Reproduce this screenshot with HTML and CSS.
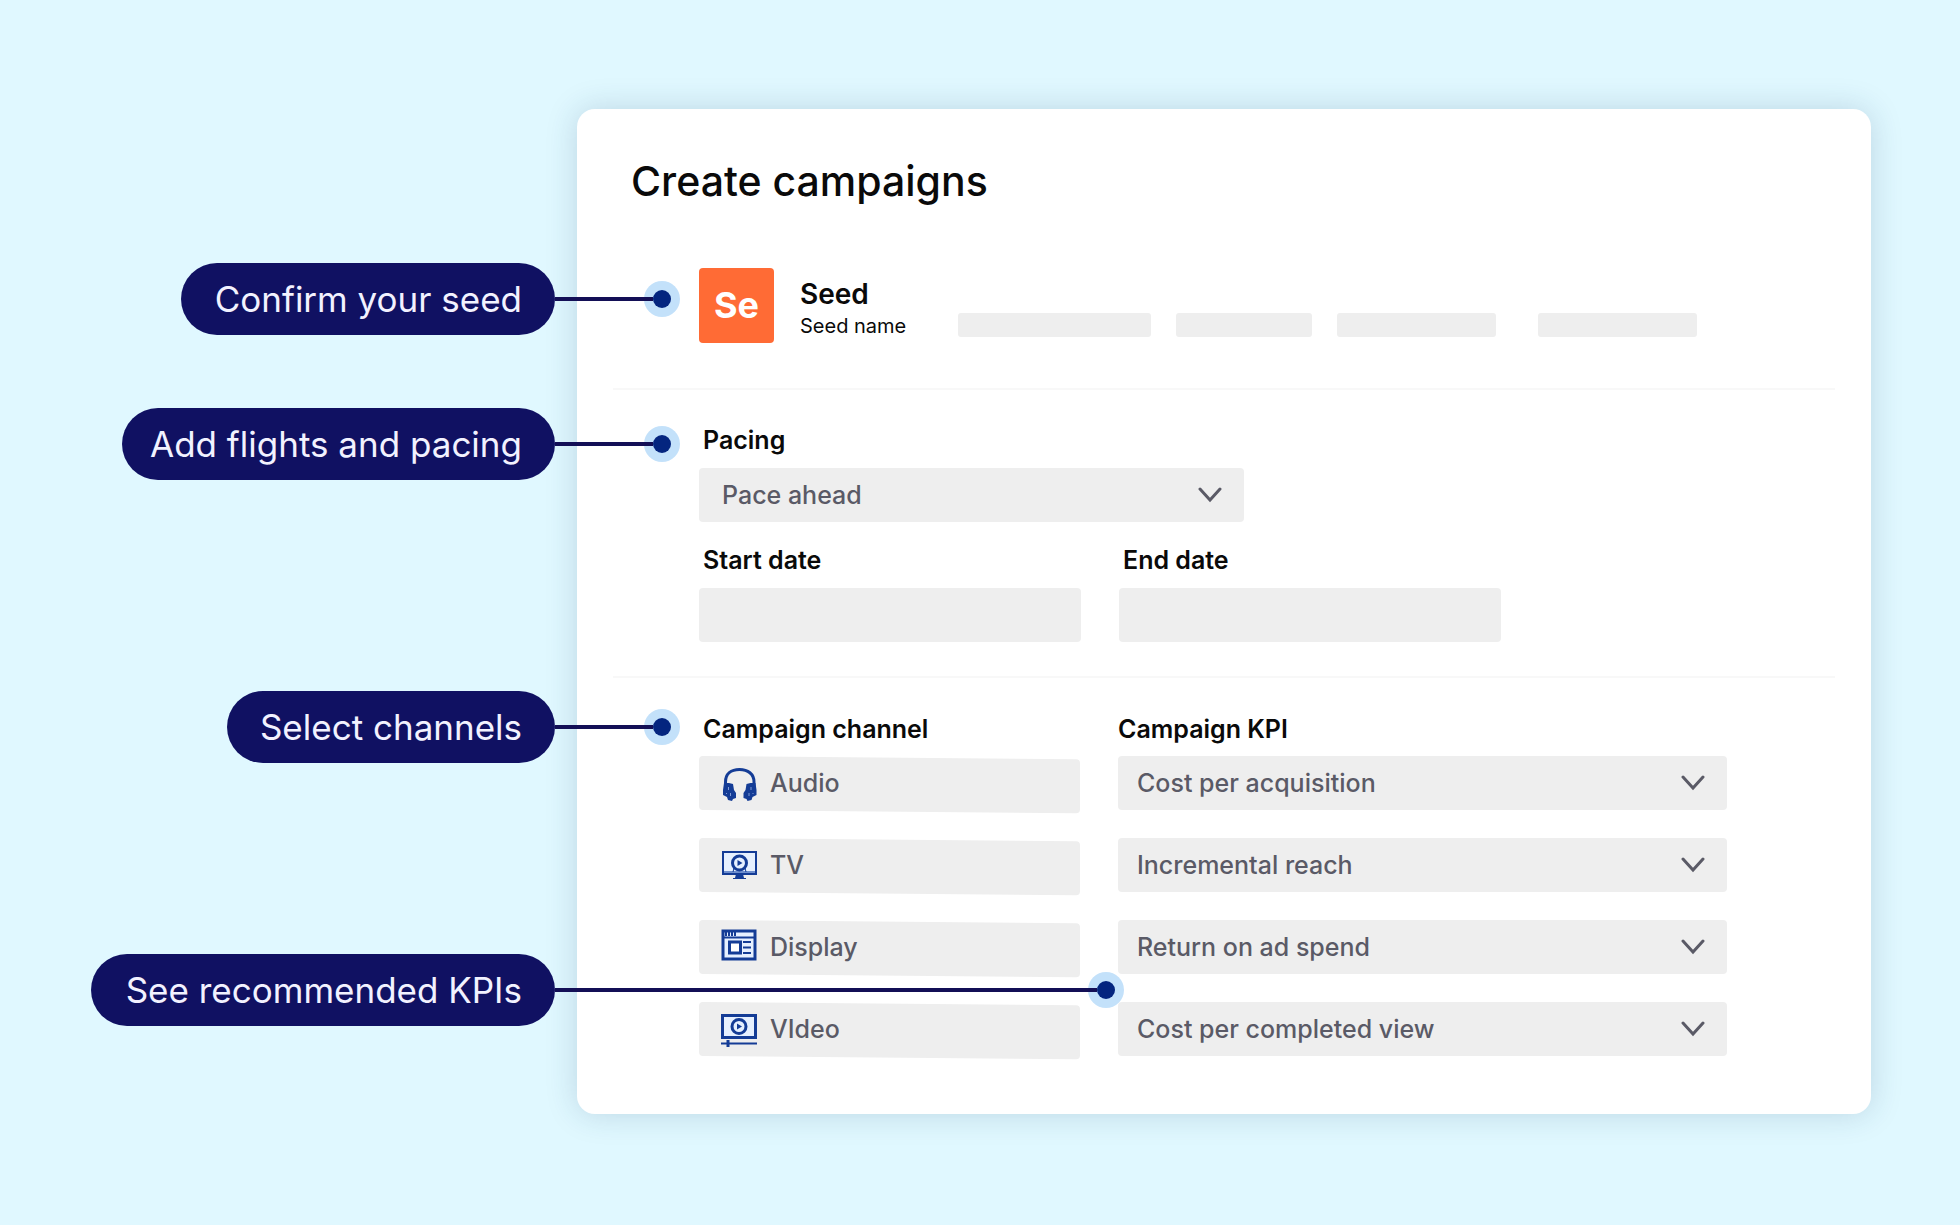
FILE: index.html
```html
<!DOCTYPE html>
<html lang="en">
<head>
<meta charset="UTF-8" />
<meta name="viewport" content="width=device-width, initial-scale=1" />
<title>Create campaigns</title>
<link rel="stylesheet" href="styles.css">
</head>
<body>

<svg class="sprite" aria-hidden="true">
  <symbol id="chevron" viewBox="0 0 24 16">
    <path d="M2 2l10 11L22 2" fill="none" stroke="currentColor" stroke-width="3" stroke-linecap="round" />
  </symbol>
</svg>

<main class="card">
  <h1>Create campaigns</h1>

  <form id="campaignForm">
    <section class="section seed-section">
      <div class="callout">
        <span class="pill pill-seed">Confirm your seed</span>
        <span class="line"></span>
        <span class="dot"></span>
      </div>

      <div class="seed">
        <div class="seed-tile">Se</div>
        <div class="seed-text">
          <strong>Seed</strong>
          <span>Seed name</span>
        </div>
        <div class="skeletons">
          <span class="bar bar-long"></span>
          <span class="bar bar-short"></span>
          <span class="bar"></span>
          <span class="bar bar-last"></span>
        </div>
      </div>
    </section>

    <section class="section pacing-section">
      <div class="callout">
        <span class="pill pill-pacing">Add flights and pacing</span>
        <span class="line"></span>
        <span class="dot"></span>
      </div>

      <div class="field pacing-field">
        <label for="pacing">Pacing</label>
        <div class="select">
          <select id="pacing">
            <option>Pace ahead</option>
          </select>
          <svg class="chevron" aria-hidden="true"><use href="#chevron" /></svg>
        </div>
      </div>

      <div class="dates">
        <div class="field">
          <label for="start">Start date</label>
          <input type="text" id="start" />
        </div>
        <div class="field">
          <label for="end">End date</label>
          <input type="text" id="end" />
        </div>
      </div>
    </section>

    <section class="section channel-section">
      <div class="callout">
        <span class="pill pill-channels">Select channels</span>
        <span class="line"></span>
        <span class="dot"></span>
      </div>

      <div class="channels">
        <h2 id="channelTitle">Campaign channel</h2>
        <ul class="rows" aria-labelledby="channelTitle">
          <li class="channel">
            <svg class="icon" viewBox="0 0 36 36" aria-hidden="true">
              <path d="M4.500 21V17C4.500 9 10 4.500 18.500 4.500S33 9 33 17v4" fill="none" stroke="currentColor" stroke-width="3" />
              <path d="M3 18h5l4 1 1 6 2 3v5l-3 1-1 2-4-1-1-3-4-2V25z" fill="currentColor" />
              <path d="M34.500 18h-5l-4 1-1 6-2 3v5l3 1 1 2 4-1 1-3 4-2V25z" fill="currentColor" />
              <path d="M7.500 22v3M9.500 28v3M30 22v3M28 28v3M5.500 28v1M32 28v1" fill="none" stroke="#7f9bd6" stroke-width="1" />
            </svg>
            Audio
          </li>
          <li class="channel">
            <svg class="icon" viewBox="0 0 36 36" aria-hidden="true">
              <rect x="2" y="5" width="33" height="22" fill="#e6f0ff" stroke="currentColor" stroke-width="2" />
              <path d="M3 25h31" stroke="#6f8fce" stroke-width="2" />
              <path d="M15 27h7l1 4h2v1H12v-1h2z" fill="currentColor" />
              <circle cx="18.500" cy="16" r="7" fill="#e6f0ff" stroke="currentColor" stroke-width="3" />
              <path d="M16.500 13l5 3-5 3z" fill="currentColor" />
              <path d="M13 21l-1 4M24 21l1 4" stroke="currentColor" stroke-width="1" />
            </svg>
            TV
          </li>
          <li class="channel">
            <svg class="icon" viewBox="0 0 36 36" aria-hidden="true">
              <rect x="2" y="2" width="32" height="28" fill="#e6f0ff" stroke="currentColor" stroke-width="3" />
              <path d="M2 8.500h32" stroke="currentColor" stroke-width="2" />
              <path d="M4 5h12" stroke="currentColor" stroke-width="4" stroke-dasharray="2 1" />
              <rect x="8.500" y="13" width="11" height="11" fill="#fff" stroke="currentColor" stroke-width="3" />
              <path d="M22 13h8M22 18.500h8M22 24h8" stroke="currentColor" stroke-width="2" />
            </svg>
            Display
          </li>
          <li class="channel">
            <svg class="icon" viewBox="0 0 36 36" aria-hidden="true">
              <rect x="1.500" y="4.500" width="33" height="22" fill="#e6f0ff" stroke="currentColor" stroke-width="3" />
              <circle cx="18" cy="15.500" r="7" fill="#e6f0ff" stroke="currentColor" stroke-width="3" />
              <path d="M16 12.500l5 3-5 3z" fill="currentColor" />
              <path d="M0 32.500h36" stroke="currentColor" stroke-width="2" />
              <path d="M7 29v7" stroke="currentColor" stroke-width="3" />
            </svg>
            VIdeo
          </li>
        </ul>
      </div>

      <div class="kpis">
        <h2 id="kpiTitle">Campaign KPI</h2>
        <div class="rows">
          <div class="select">
            <select aria-label="Audio KPI"><option>Cost per acquisition</option></select>
            <svg class="chevron" aria-hidden="true"><use href="#chevron" /></svg>
          </div>
          <div class="select">
            <select aria-label="TV KPI"><option>Incremental reach</option></select>
            <svg class="chevron" aria-hidden="true"><use href="#chevron" /></svg>
          </div>
          <div class="select">
            <select aria-label="Display KPI"><option>Return on ad spend</option></select>
            <svg class="chevron" aria-hidden="true"><use href="#chevron" /></svg>
          </div>
          <div class="select">
            <select aria-label="Video KPI"><option>Cost per completed view</option></select>
            <svg class="chevron" aria-hidden="true"><use href="#chevron" /></svg>
          </div>
        </div>
      </div>

      <div class="callout callout-kpi">
        <span class="pill pill-kpi">See recommended KPIs</span>
        <span class="line line-long"></span>
        <span class="dot"></span>
      </div>
    </section>
  </form>
</main>

</body>
</html>
```

FILE: styles.css
```css
* {
  box-sizing: border-box;
}

body {
  font-family: Inter, "Liberation Sans", sans-serif;
  background: #e0f8ff;
  color: #0a0a0a;
  margin: 0;
  padding: 109px 89px 109px 577px;
}

h1, h2, ul {
  margin: 0;
  padding: 0;
}

.sprite {
  display: none;
}

.card {
  background: #fff;
  border-radius: 18px;
  box-shadow: 0 0 32px rgb(20 60 100 / 0.18);
  padding: 47px 36px 58px;
}

h1 {
  font-size: 41px;
  font-weight: 500;
  line-height: 50px;
  padding-left: 18px;
}

.section {
  position: relative;
  padding: 35px 108px 35px 86px;
  border-bottom: 2px solid #f8f8f8;
}

/* Callouts hang off the left side of the card */
.callout {
  position: absolute;
  top: 18px;
  right: calc(100% - 58px);
  display: flex;
  align-items: center;
}

.pill {
  height: 72px;
  line-height: 72px;
  padding-right: 33px;
  border-radius: 36px;
  background: #101162;
  color: #f2f2ff;
  font-size: 35px;
  text-align: right;
  white-space: nowrap;
}

.pill-seed {
  width: 374px;
}

.pill-pacing {
  width: 433px;
}

.pill-channels {
  width: 328px;
}

.pill-kpi {
  width: 464px;
}

.line {
  width: 98px;
  height: 4px;
  background: #130f56;
  z-index: 1;
}

.line-long {
  width: 542px;
}

.dot {
  width: 18px;
  height: 18px;
  border-radius: 50%;
  background: #04257f;
  box-shadow: 0 0 0 9px #c3e1fa;
}

/* Seed */
.seed-section {
  padding-top: 62px;
  padding-bottom: 45px;
}

.seed-section .callout {
  top: 57px;
}

.seed {
  display: flex;
}

.seed-tile {
  width: 75px;
  height: 75px;
  line-height: 75px;
  border-radius: 4px;
  background: #ff6b35;
  color: #fff;
  font-size: 36px;
  font-weight: 700;
  text-align: center;
}

.seed-text {
  display: flex;
  flex-direction: column;
  width: 184px;
  padding: 10px 0 0 26px;
}

.seed-text strong {
  font-size: 28px;
  font-weight: 600;
  line-height: 32px;
}

.seed-text span {
  font-size: 20px;
  line-height: 32px;
}

.skeletons {
  display: flex;
  align-items: flex-end;
  gap: 25px;
  padding-bottom: 6px;
}

.bar {
  width: 159px;
  height: 24px;
  border-radius: 3px;
  background: #eee;
}

.bar-long {
  width: 193px;
}

.bar-short {
  width: 136px;
}

.bar-last {
  margin-left: 17px;
}

/* Fields */
label, h2 {
  display: block;
  font-size: 25px;
  font-weight: 600;
  line-height: 32px;
}

.field label,
.channels h2 {
  padding-left: 4px;
}

.field {
  display: grid;
  gap: 12px;
}

.pacing-section {
  padding-top: 34px;
  padding-bottom: 34px;
}

.pacing-field {
  max-width: 545px;
  margin-bottom: 22px;
}

.dates {
  display: grid;
  grid-template-columns: 382px 382px;
  gap: 38px;
}

input, select {
  width: 100%;
  height: 54px;
  border: 0;
  border-radius: 4px;
  background: #eee;
  color: #5a5a66;
  font: 500 25px Inter, "Liberation Sans", sans-serif;
}

.select {
  display: grid;
  align-items: center;
}

select {
  grid-area: 1 / 1;
  appearance: none;
  padding: 0 60px 0 19px;
}

#pacing {
  padding-left: 23px;
}

.chevron {
  grid-area: 1 / 1;
  justify-self: end;
  width: 24px;
  height: 16px;
  margin-right: 22px;
  color: #5a5a66;
  pointer-events: none;
}

/* Channels and KPIs */
.channel-section {
  display: grid;
  grid-template-columns: 381px 1fr;
  gap: 38px;
  padding-bottom: 0;
  border-bottom: 0;
}

.channel-section .callout {
  top: 13px;
}

.channel-section .callout-kpi {
  top: 276px;
  right: calc(100% - 502px);
}

.rows {
  display: grid;
  gap: 28px;
  margin-top: 11px;
  list-style: none;
}

.channel {
  position: relative;
  z-index: 0;
  display: flex;
  align-items: center;
  gap: 13px;
  height: 54px;
  padding-left: 22px;
  color: #5a5a66;
  font-size: 25px;
  font-weight: 500;
}

/* The channel plates slope down slightly to the right */
.channel::before {
  content: "";
  position: absolute;
  inset: 0;
  z-index: -1;
  border-radius: 4px;
  background: #eee;
  transform: skewY(0.5deg);
  transform-origin: left;
}

.icon {
  width: 36px;
  height: 36px;
  color: #143c96;
}
```
